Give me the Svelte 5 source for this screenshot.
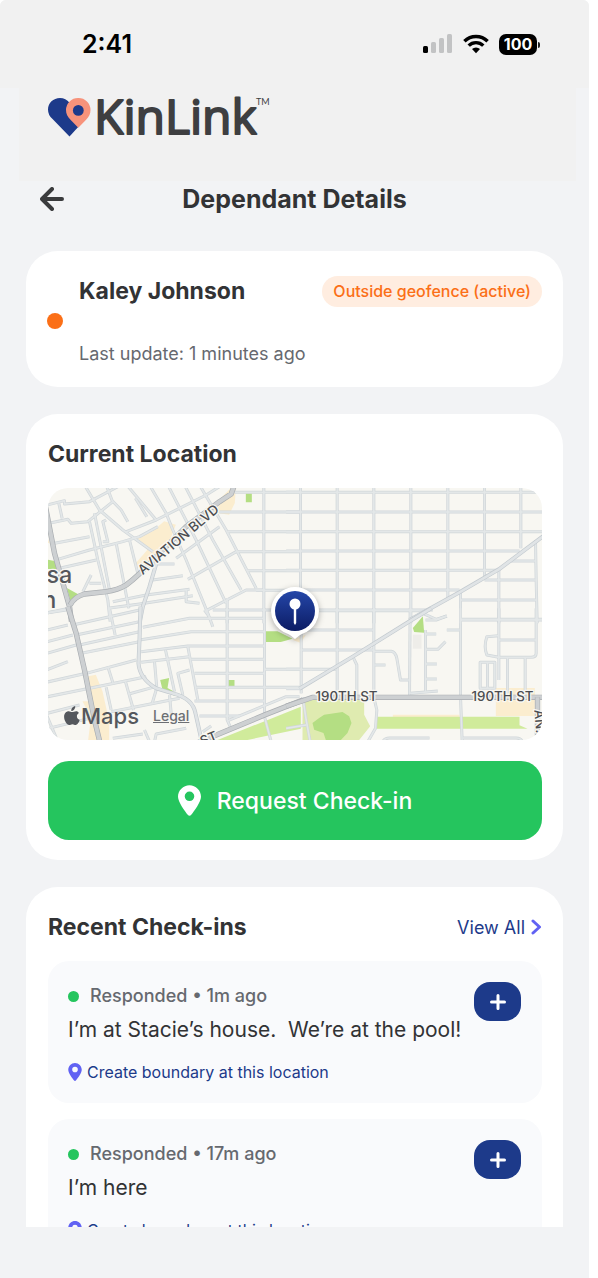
<script lang="ts">
  interface CheckIn {
    id: number
    status: string
    ago: string
    message: string
  }

  const checkIns: CheckIn[] = [
    { id: 1, status: 'Responded', ago: '1m ago', message: 'I’m at Stacie’s house.  We’re at the pool!' },
    { id: 2, status: 'Responded', ago: '17m ago', message: 'I’m here' }
  ]

  // The map is drawn in four quadrants, each with its own origin
  const quadrants = [
    {
      id: 'nw',
      origin: '-24 -24',
      minor: [
        'M135 15L180 90L250 150L340 215',
        'M200 15L218 62L245 90L265 125',
        'M262 15L350 120',
        'M288 55L322 110',
        'M330 15L380 100L400 150L440 240L505 400L520 440',
        'M385 15L470 180L560 370',
        'M435 15L520 180L605 330',
        'M480 15L560 150L650 325',
        'M15 77L75 62V72L150 65L235 20',
        'M58 70L68 115',
        'M28 130L85 118L95 130L145 125L220 65',
        'M45 190L150 170',
        'M55 238L150 210L250 185L300 170L355 140',
        'M60 265L170 240',
        'M165 100L210 330',
        'M150 125L175 240L205 360L212 425',
        'M200 120L190 125L205 185H190',
        'M230 190L268 385',
        'M270 180L295 280',
        'M260 155L350 120L500 45L540 20',
        'M410 235L540 140',
        'M445 298L590 215',
        'M500 392L620 330H675',
        'M355 252H405',
        'M340 300L430 287',
        'M220 365L320 345L450 328',
        'M205 385L300 372L460 347',
        'M440 330V365L480 370',
        'M130 335L155 285',
        'M150 310H185',
        'M15 400L90 385',
        'M585 37H780',
        'M540 96H780',
        'M565 155H780',
        'M590 215H780',
        'M622 272H780',
        'M650 331H780',
        'M520 390H780',
        'M673 15V430',
        'M563 355V430'
      ],
      medium: ['M352 245L330 320L310 380L300 430'],
      major: [
        'M18 80L45 220L90 380L96 425',
        'M92 375Q105 350 135 342L200 335Q235 330 260 315Q295 290 350 230L440 140L540 65L575 42L585 15'
      ]
    },
    {
      id: 'ne',
      origin: '726 -24',
      minor: [
        'M-10 37H770',
        'M-10 96H770',
        'M-10 155H770',
        'M-10 213H690',
        'M-10 271H628',
        'M-10 330H510',
        'M-10 390H430',
        'M33 15V430',
        'M143 15V430',
        'M253 15V430',
        'M364 15V430',
        'M475 15V355',
        'M585 15V295',
        'M694 15V205',
        'M660 243H738',
        'M585 300H738',
        'M513 360H740',
        'M513 418H770',
        'M738 180L740 300L743 430',
        'M628 268V430',
        'M513 330V430',
        'M400 400L440 418L472 408'
      ],
      medium: ['M770 162L628 268L510 337L360 420'],
      major: []
    },
    {
      id: 'sw',
      origin: '-24 366',
      minor: [
        'M15 62L85 45',
        'M15 97L100 75',
        'M15 132L110 105',
        'M15 182L85 155',
        'M15 218L140 190L290 150',
        'M15 262L150 235L320 200',
        'M15 312L120 285',
        'M15 358L150 325',
        'M15 10L80 0',
        'M100 45L300 0',
        'M110 75L300 35',
        'M120 105L300 65',
        'M125 130L300 95',
        'M310 52L450 25H675',
        'M300 90L455 65H675',
        'M305 125L445 108H675',
        'M305 157L450 140',
        'M455 148H675',
        'M465 190H675',
        'M470 232H780',
        'M465 273H675',
        'M480 318H600',
        'M210 -5L227 75',
        'M378 120L405 245',
        'M445 110L475 270',
        'M345 155L352 235',
        'M430 255L415 190L450 180',
        'M205 170L220 218',
        'M200 232L215 300',
        'M258 215L282 300',
        'M268 252L340 232',
        'M215 305L420 265',
        'M350 240L338 280',
        'M390 255L395 310',
        'M563 -5V330L572 350',
        'M675 -5V310',
        'M675 178H780',
        'M565 332L740 260H780',
        'M490 365L515 348',
        'M315 360L330 395',
        'M345 395L350 372L440 355',
        'M220 385L310 372',
        'M495 0L508 18',
        'M675 320L695 395',
        'M15 300L55 395'
      ],
      medium: [
        'M303 -10L300 90L297 160Q300 205 350 235L400 250Q460 265 468 310L487 395'
      ],
      major: ['M85 -10L110 70L135 180L165 330L182 400', 'M475 398L675 315L790 270']
    },
    {
      id: 'se',
      origin: '726 366',
      minor: [
        'M-10 2H390',
        'M-10 60H253',
        'M33 120H253',
        'M-10 178H140',
        'M-10 236H38',
        'M35 -5V250',
        'M143 -5V250',
        'M253 -5V250',
        'M362 -5L360 255',
        'M408 60V245',
        'M513 -5V260L518 395',
        'M628 -5V210',
        'M740 -5V130Q740 142 725 142H628L592 135Q582 110 592 80L628 77',
        'M628 90H740',
        'M513 30H770',
        'M408 30H440L472 18',
        'M408 72H440',
        'M408 118H445L468 95',
        'M408 162H442',
        'M408 207H442',
        'M362 250L445 243',
        'M472 60H510',
        'M253 124H305Q318 126 322 145L333 210H358',
        'M255 165H288',
        'M190 140L202 165V260',
        'M572 157H616V235H572Z',
        'M594 157V235',
        'M654 142V250',
        'M707 142V250',
        'M40 262L50 330L62 395',
        'M253 262L262 300L258 355L235 395',
        'M280 395Q285 384 300 384H420',
        'M520 384H680Q695 384 698 395',
        'M-10 355L50 345'
      ],
      medium: ['M425 -5L370 28L190 140L30 236'],
      major: ['M-10 289L70 262H770', 'M744 262V395']
    }
  ]
</script>

{#snippet pin(cls: string)}
  <svg class={cls} viewBox="0 0 12 16" aria-hidden="true">
    <path
      fill-rule="evenodd"
      d="M6 0C2.7 0 0 2.7 0 6c0 2.7 3.6 7.500 5.200 9.600.4.500 1.200.5 1.600 0C8.400 13.500 12 8.700 12 6c0-3.300-2.700-6-6-6zm0 8.300a2.500 2.500 0 1 1 0-5 2.500 2.500 0 0 1 0 5z"
    />
  </svg>
{/snippet}

<div class="screen">
  <div class="status-bar">
    <span class="time">2:41</span>
    <div class="indicators">
      <svg width="30" height="20" viewBox="0 0 30 20" aria-label="Signal">
        <rect x="0" y="12" width="5" height="7" rx="1.500" />
        <g fill="#c2c3c4">
          <rect x="8" y="8" width="5" height="11" rx="1.500" />
          <rect x="16" y="4" width="5" height="15" rx="1.500" />
          <rect x="24" y="0" width="5" height="19" rx="1.500" />
        </g>
      </svg>
      <svg width="26" height="20" viewBox="0 0 26 20" aria-label="Wi-Fi">
        <g fill="none" stroke="#000" stroke-width="3.400">
          <path d="M1.400 7.300a16.500 16.500 0 0 1 23.200 0" />
          <path d="M5.700 11.600a10.400 10.400 0 0 1 14.600 0" />
        </g>
        <path d="M13 19.200l-4-4.100a5.700 5.700 0 0 1 8 0z" />
      </svg>
      <span class="battery">100</span>
    </div>
  </div>

  <div class="brand">
    <svg width="226" height="60" viewBox="0 0 226 60" role="img" aria-label="KinLink">
      <path
        fill="#1d3a8a"
        d="M21.500 41.500L4.300 23.800A12.400 12.400 0 0 1 0 14.500C0 8 5.300 3 12 3c3.800 0 7.200 1.800 9.500 4.700L32 30z"
      />
      <path
        fill="#f7937b"
        d="M30.300 3A12 12 0 0 0 18 15c0 4 1.600 6.700 4.500 9.700l7.800 8 7.800-8c2.900-3 4.400-5.700 4.400-9.700A12 12 0 0 0 30.300 3z"
      />
      <circle cx="30.300" cy="15.400" r="5.400" fill="#1d3a8a" />
      <text class="wordmark" x="46" y="39">KinLink</text>
      <text class="tm" x="208" y="10">TM</text>
    </svg>
  </div>

  <header>
    <button type="button" class="back" aria-label="Back">
      <svg width="24" height="24" viewBox="0 0 24 24">
        <path d="M12 2L2 12l10 10M2.500 12H22" />
      </svg>
    </button>
    <h1>Dependant Details</h1>
  </header>

  <main>
    <section class="card person">
      <span class="dot alert"></span>
      <div class="person-info">
        <div class="row">
          <h2>Kaley Johnson</h2>
          <span class="badge">Outside geofence (active)</span>
        </div>
        <p>Last update: 1 minutes ago</p>
      </div>
    </section>

    <section class="card">
      <h2>Current Location</h2>
      <div class="map">
        <svg class="streets" viewBox="0 0 1485 756" preserveAspectRatio="xMidYMid slice" role="img" aria-label="Map">
          <rect width="1485" height="756" fill="#f8f7f2" />

          <g fill="#fbedcf">
            <path d="M270 150L315 130L350 100L385 110L370 150L330 205L275 240L265 225L300 185z" />
            <path d="M515 35L550 0H565L562 45L545 80L510 75z" />
            <path d="M122 565L145 560L165 610L185 700V756H122L130 690L105 640H130z" />
            <path d="M1345 600H1462V684H1345z" />
            <path d="M1036 680H1236V690H1036z" />
            <path d="M735 455L775 440L760 465z" />
            <path d="M0 150L8 170V165H0z" />
          </g>
          <g fill="#b4de83">
            <path d="M595 16h18v27h-18z" />
            <path d="M58 300L95 320L70 342z" />
            <path d="M0 215L25 220L28 243H0z" />
            <path d="M654 430H690L735 452L700 462H654z" />
            <path d="M1126 385L1096 420L1100 432L1130 434z" />
            <path d="M338 576L365 570L360 600L382 612V624L345 605z" />
            <path d="M543 576h18v18h-18z" />
          </g>
          <g fill="#d0eb9b">
            <path d="M510 756L760 656V722L600 756z" />
            <path d="M988 686H1416V712L1440 722H988z" />
          </g>
          <path fill="#dfebb0" d="M765 640L800 632H950V680L968 715L935 756H765z" />
          <path
            fill="#b4de83"
            d="M795 705L815 690L830 680L885 672L905 685L912 705L900 735L880 756H835L828 735L800 725z"
          />
          <path fill="#eeede9" d="M1096 440h26v42h-26z" />

          {#each quadrants as q (q.id)}
            <g class="casing" transform="translate({q.origin})">
              {#each q.minor as d}<path {d} />{/each}
            </g>
          {/each}
          {#each quadrants as q (q.id)}
            <g class="minor" transform="translate({q.origin})">
              {#each q.minor as d}<path {d} />{/each}
            </g>
          {/each}
          {#each quadrants as q (q.id)}
            <g transform="translate({q.origin})">
              {#each q.medium as d}<path class="medium-edge" {d} /><path class="medium" {d} />{/each}
              {#each q.major as d}<path class="major-edge" {d} /><path class="major" {d} />{/each}
            </g>
          {/each}

          <g class="labels">
            <text transform="translate(286 262) rotate(-40)">AVIATION BLVD</text>
            <text x="804" y="638">190TH ST</text>
            <text x="1272" y="638">190TH ST</text>
            <text transform="translate(464 774) rotate(-22)">ST</text>
            <text transform="translate(1460 666) rotate(85)">AN.</text>
          </g>
          <g class="city">
            <text x="-3" y="284">sa</text>
            <text x="-16" y="360">n</text>
          </g>
        </svg>

        <svg class="marker" width="52" height="58" viewBox="0 0 52 58" aria-hidden="true">
          <defs>
            <linearGradient id="marker-fill" x1="0" y1="0" x2="0" y2="1">
              <stop offset="0" stop-color="#2446a8" />
              <stop offset="1" stop-color="#0c1c64" />
            </linearGradient>
          </defs>
          <path fill="#fff" d="M26 2a24 24 0 0 1 8 46.600c-3 1-5 3.400-8 5.400-3-2-5-4.400-8-5.400A24 24 0 0 1 26 2z" />
          <circle cx="26" cy="26" r="20" fill="url(#marker-fill)" />
          <circle cx="26" cy="19" r="5.500" fill="#fff" />
          <path fill="#fff" d="M24.800 24h2.400v14l-1.200 2-1.200-2z" />
        </svg>

        <div class="attribution">
          <svg width="16" height="20" viewBox="0 0 16 20" aria-hidden="true">
            <path
              d="M11.200 0c.2 1.500-.4 2.800-1.200 3.700S8.200 5.100 7.300 5C7.100 3.700 7.700 2.400 8.500 1.500S10.400.1 11.200 0zM14.900 6.900c-1.300.8-2 1.900-2 3.400 0 1.800 1 3.100 2.800 3.700-.7 2.100-2.300 5-4.100 5-1.200 0-1.700-.8-3.200-.8s-2 .8-3.200.8C2.900 19 .1 14.700.1 10.800.1 7.300 2.300 5.200 4.700 5.200c1.400 0 2.500.9 3.500.9s2.300-.9 4-.9c1.100 0 2.100.6 2.700 1.700z"
            />
          </svg>
          <span>Maps</span>
          <a href="#legal">Legal</a>
        </div>
      </div>
      <button type="button" class="request">
        {@render pin('pin-large')}
        Request Check-in
      </button>
    </section>

    <section class="card">
      <div class="row">
        <h2>Recent Check-ins</h2>
        <a class="view-all" href="#check-ins">
          View All
          <svg width="11" height="16" viewBox="0 0 11 16" aria-hidden="true">
            <path d="M2 2l6.500 6L2 14" />
          </svg>
        </a>
      </div>
      <ul>
        {#each checkIns as item (item.id)}
          <li>
            <div class="entry">
              <div class="entry-status">
                <span class="dot ok"></span>
                {item.status} • {item.ago}
              </div>
              <p>{item.message}</p>
              <a class="boundary" href="#boundary">
                {@render pin('pin-small')}
                Create boundary at this location
              </a>
            </div>
            <button type="button" class="add" aria-label="Add">
              <svg width="16" height="16" viewBox="0 0 16 16">
                <path d="M8 1.500v13M1.500 8h13" />
              </svg>
            </button>
          </li>
        {/each}
      </ul>
    </section>
  </main>
</div>

<style>
  :global(body) {
    margin: 0;
    background: #fff;
  }

  .screen {
    display: flex;
    flex-direction: column;
    box-sizing: border-box;
    height: 100vh;
    margin-right: 9px;
    padding-bottom: 51px;
    border-radius: 6px 6px 0 0;
    overflow: hidden;
    background: #f2f3f5;
    color: #323335;
    font-family: Inter, 'Liberation Sans', sans-serif;
  }

  .status-bar {
    display: flex;
    flex: none;
    align-items: center;
    justify-content: space-between;
    box-sizing: border-box;
    height: 88px;
    padding: 0 52px 0 82px;
    background: #f1f1f1;
    color: #000;
  }

  .time {
    font-size: 25px;
    font-weight: 600;
  }

  .indicators {
    display: flex;
    align-items: center;
    gap: 10px;
  }

  .battery {
    position: relative;
    width: 38px;
    border-radius: 7px;
    background: #000;
    color: #fff;
    font-size: 16px;
    font-weight: 700;
    line-height: 21px;
    text-align: center;
  }

  .battery::after {
    content: '';
    position: absolute;
    top: 8px;
    right: -3px;
    width: 2px;
    height: 6px;
    border-radius: 0 2px 2px 0;
    background: #222;
  }

  .brand {
    flex: none;
    height: 86px;
    margin: 0 13px 0 19px;
    padding: 7px 0 0 29px;
    background: #f1f1f1;
  }

  .brand svg {
    display: block;
    overflow: visible;
  }

  .wordmark {
    fill: #3e3f41;
    stroke: #3e3f41;
    stroke-width: 2;
    stroke-linejoin: round;
    font-family: 'Open Sans', sans-serif;
    font-size: 48px;
    font-weight: 400;
  }

  .tm {
    fill: #3e3f41;
    font-family: Lato, sans-serif;
    font-size: 9px;
  }

  header {
    display: flex;
    flex: none;
    align-items: center;
    height: 36px;
    padding: 0 40px;
  }

  h1 {
    flex: 1;
    margin: 0 24px 0 0;
    font-size: 25px;
    font-weight: 700;
    line-height: 36px;
    text-align: center;
  }

  button {
    padding: 0;
    border: 0;
    font: inherit;
    cursor: pointer;
  }

  .back {
    width: 24px;
    height: 24px;
    background: none;
  }

  .back svg {
    display: block;
    fill: none;
    stroke: #3a3b3d;
    stroke-width: 4;
    stroke-linecap: round;
    stroke-linejoin: round;
  }

  main {
    flex: 1;
    min-height: 0;
    padding: 34px 26px 0;
    overflow: hidden;
  }

  .card {
    margin-bottom: 27px;
    padding: 24px 21px 20px 22px;
    border-radius: 32px;
    background: #fff;
  }

  h2 {
    margin: 0;
    font-size: 23px;
    font-weight: 700;
    line-height: 32px;
  }

  .row {
    display: flex;
    align-items: center;
    justify-content: space-between;
  }

  .dot {
    flex: none;
    border-radius: 50%;
  }

  .alert {
    width: 16px;
    height: 16px;
    background: #fb6f17;
  }

  .ok {
    width: 11px;
    height: 11px;
    background: #25c55e;
  }

  .person {
    display: flex;
    align-items: center;
    gap: 16px;
    padding-left: 21px;
  }

  .person-info {
    flex: 1;
  }

  .person p {
    margin: 34px 0 0;
    color: #66696f;
    font-size: 18px;
    line-height: 26px;
  }

  .badge {
    padding: 0 11px;
    border-radius: 16px;
    background: #ffede0;
    color: #fb6f17;
    font-size: 16px;
    font-weight: 500;
    line-height: 31px;
  }

  .map {
    position: relative;
    height: 252px;
    margin: 18px 0 21px;
    border-radius: 20px;
    overflow: hidden;
  }

  .streets {
    display: block;
    width: 100%;
    height: 100%;
  }

  .streets path {
    stroke-linejoin: round;
  }

  .casing,
  .minor,
  .medium,
  .medium-edge,
  .major,
  .major-edge {
    fill: none;
  }

  .casing {
    stroke: #d0d6d9;
    stroke-width: 9;
  }

  .minor {
    stroke: #e3e7e8;
    stroke-width: 5;
  }

  .medium-edge {
    stroke: #c3cacf;
    stroke-width: 12;
  }

  .medium {
    stroke: #e0e4e6;
    stroke-width: 8;
  }

  .major-edge {
    stroke: #a9adb1;
    stroke-width: 16;
  }

  .major {
    stroke: #cdd0d2;
    stroke-width: 12;
  }

  .labels,
  .city {
    fill: #4b4d51;
    stroke: #f8f7f2;
    stroke-width: 8;
    stroke-linejoin: round;
    paint-order: stroke;
    font-size: 40px;
    font-weight: 500;
  }

  .city {
    fill: #55575c;
    font-size: 70px;
  }

  .marker {
    position: absolute;
    top: 50%;
    left: 50%;
    transform: translate(-50%, -29px);
    filter: drop-shadow(0 2px 3px rgba(0, 0, 0, 0.3));
  }

  .attribution {
    position: absolute;
    bottom: 8px;
    left: 16px;
    display: flex;
    align-items: center;
    color: #55585d;
    font-size: 22px;
    font-weight: 500;
    line-height: 32px;
  }

  .attribution svg {
    margin-right: 1px;
    fill: #55585d;
  }

  .attribution a {
    margin-left: 14px;
    color: #6c6f74;
    font-size: 14px;
  }

  .request {
    display: flex;
    align-items: center;
    justify-content: center;
    gap: 16px;
    width: 100%;
    height: 79px;
    border-radius: 21px;
    background: #25c55e;
    color: #fff;
    font-size: 23px;
    font-weight: 500;
  }

  .request :global(.pin-large) {
    width: 23px;
    height: 31px;
    fill: #fff;
  }

  .view-all {
    display: flex;
    align-items: center;
    gap: 6px;
    color: #1d3a8a;
    font-size: 18px;
    text-decoration: none;
  }

  .view-all svg {
    fill: none;
    stroke: #6162f3;
    stroke-width: 3;
    stroke-linecap: round;
    stroke-linejoin: round;
  }

  ul {
    display: flex;
    flex-direction: column;
    gap: 16px;
    margin: 18px 0 0;
    padding: 0;
    list-style: none;
  }

  li {
    display: flex;
    align-items: flex-start;
    padding: 21px 21px 19px 20px;
    border-radius: 21px;
    background: #f9fafc;
  }

  .entry {
    flex: 1;
  }

  .entry-status {
    display: flex;
    align-items: center;
    gap: 11px;
    color: #66696f;
    font-size: 18px;
    font-weight: 500;
    line-height: 28px;
  }

  .entry p {
    margin: 2px 0 12px;
    font-size: 21px;
    line-height: 36px;
    white-space: pre-wrap;
  }

  .boundary {
    display: flex;
    align-items: center;
    gap: 5px;
    color: #1d3a8a;
    font-size: 16px;
    line-height: 24px;
    text-decoration: none;
  }

  .boundary :global(.pin-small) {
    width: 14px;
    height: 18px;
    fill: #6162f3;
  }

  .add {
    display: grid;
    place-items: center;
    width: 47px;
    height: 39px;
    border-radius: 16px;
    background: #1d3a8a;
  }

  .add svg {
    fill: none;
    stroke: #fff;
    stroke-width: 3;
    stroke-linecap: round;
  }
</style>
